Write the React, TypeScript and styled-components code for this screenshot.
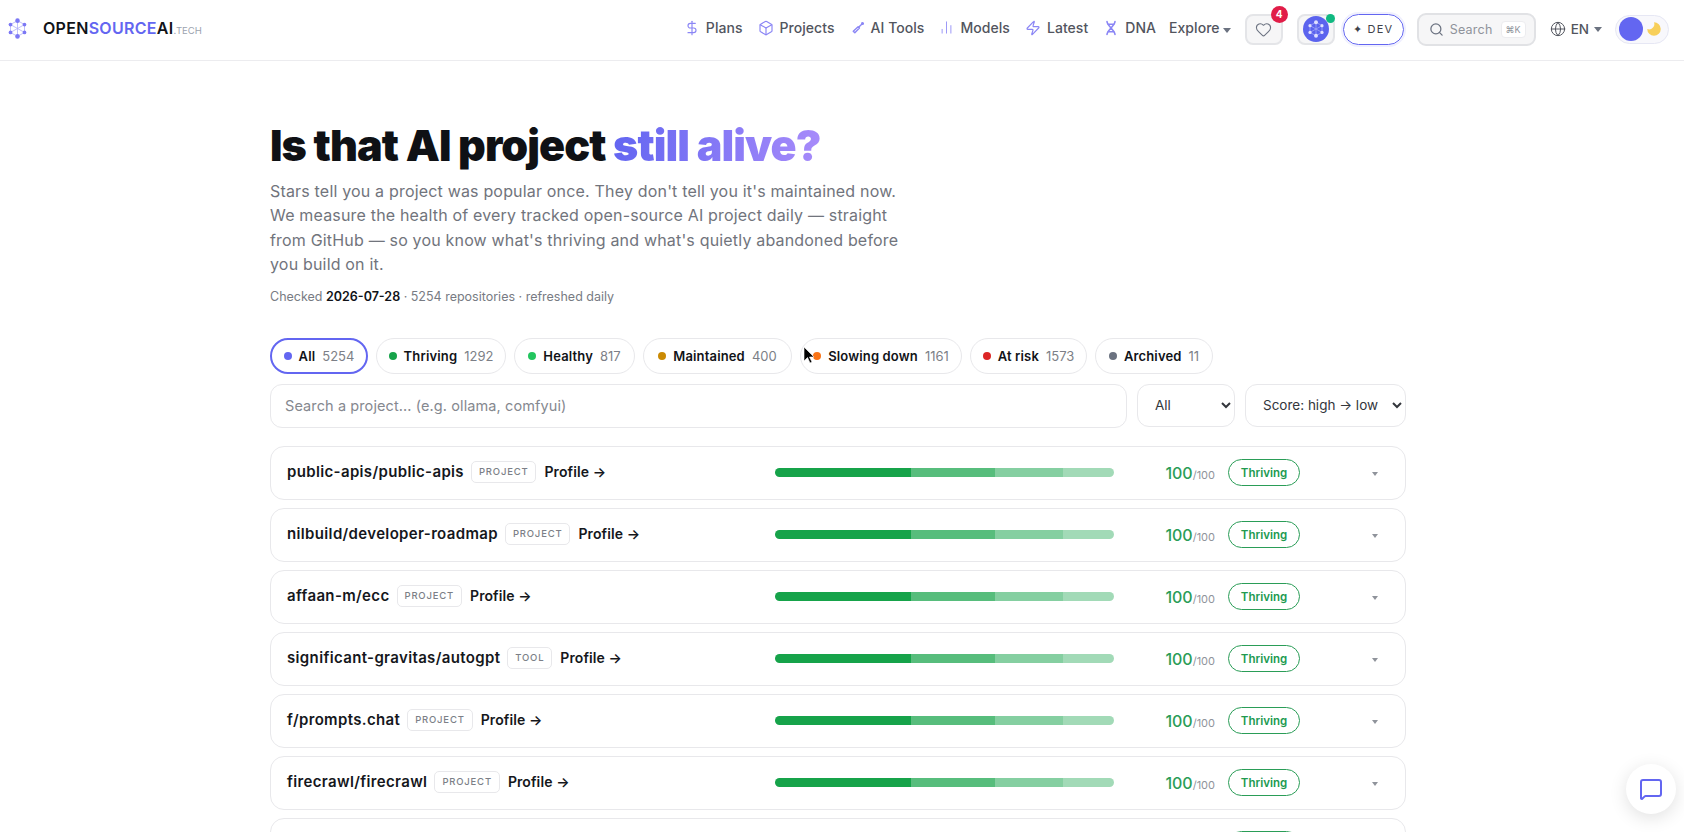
import React from 'react'
import styled, { createGlobalStyle } from 'styled-components'
import { Box, ChartNoAxesColumn, DollarSign, Globe, Heart, MessageSquare, Search, Zap } from 'lucide-react'

const font = `Inter, "Open Sans", sans-serif`

const GlobalStyle = createGlobalStyle`
  html, body {
    margin: 0;
    height: 832px;
    overflow: hidden;
    background: #fff;
    font-family: ${font};
  }
  * { box-sizing: border-box; }
`

const Header = styled.header`
  height: 61px;
  border-bottom: 1px solid #ececef;
  display: flex;
  align-items: center;
  justify-content: space-between;
  padding: 0 15px 2px 7px;
`

const Brand = styled.div`
  display: flex;
  align-items: center;
  gap: 15px;
  padding-bottom: 2px;
`

const BrandName = styled.div`
  font-size: 16px;
  font-weight: 600;
  letter-spacing: 0.3px;
  color: #111318;
  span { color: #6366f1; }
  small {
    font-size: 9.5px;
    font-weight: 400;
    letter-spacing: 0;
    color: #9ca3af;
  }
`

const Right = styled.div`
  display: flex;
  align-items: center;
  gap: 14px;
`

const Nav = styled.nav`
  display: flex;
  align-items: center;
  gap: 15px;
  padding-bottom: 3px;
`

const NavLink = styled.a`
  display: flex;
  align-items: center;
  gap: 6px;
  font-size: 14px;
  font-weight: 500;
  letter-spacing: 0.05px;
  color: #52555e;
  white-space: nowrap;
  svg { color: #8b86f5; flex: none; }
`

const ExploreLink = styled(NavLink)`
  margin-left: -2px;
`

const Caret = styled.i<{ $color?: string; $small?: boolean; $gap?: number }>`
  display: inline-block;
  margin-left: ${p => p.$gap ?? 6}px;
  border-left: ${p => (p.$small ? 3 : 4)}px solid transparent;
  border-right: ${p => (p.$small ? 3 : 4)}px solid transparent;
  border-top: ${p => (p.$small ? 4 : 5)}px solid ${p => p.$color || '#6b7280'};
`

const IconButton = styled.div`
  position: relative;
  width: 38px;
  height: 31px;
  border: 2px solid #e4e5e8;
  border-radius: 8px;
  background: #f6f6f7;
  display: flex;
  align-items: center;
  justify-content: center;
  color: #6b7280;
`

const CountBadge = styled.span`
  position: absolute;
  top: -10px;
  right: -7px;
  width: 17px;
  height: 17px;
  border-radius: 50%;
  background: #e11d48;
  color: #fff;
  font-size: 10px;
  font-weight: 700;
  display: flex;
  align-items: center;
  justify-content: center;
`

const OnlineDot = styled.span`
  position: absolute;
  top: -2px;
  right: -2px;
  width: 9px;
  height: 9px;
  border-radius: 50%;
  background: #10b981;
`

const Avatar = styled.div`
  width: 26px;
  height: 26px;
  border-radius: 50%;
  background: #5b63ee;
  display: flex;
  align-items: center;
  justify-content: center;
`

const Pair = styled.div`
  display: flex;
  align-items: center;
  gap: 8px;
`

const DevPill = styled.div`
  width: 61px;
  height: 31px;
  border: 1.5px solid #6366f1;
  border-radius: 16px;
  box-shadow: 0 0 0 2px #f0f0fe;
  display: flex;
  align-items: center;
  justify-content: center;
  gap: 4px;
  padding-bottom: 1px;
  font-size: 11px;
  font-weight: 400;
  letter-spacing: 1.3px;
  color: #3f424a;
`

const SearchBox = styled.div`
  width: 119px;
  height: 33px;
  margin-left: -1px;
  border: 2px solid #e1e2e5;
  border-radius: 9px;
  background: #f6f6f7;
  display: flex;
  align-items: center;
  padding: 0 8px 0 10px;
  gap: 6px;
  font-size: 12.5px;
  letter-spacing: 0.25px;
  color: #8f939b;
  svg { color: #6b7280; flex: none; }
`

const Kbd = styled.span`
  margin-left: auto;
  padding: 2px 4px;
  background: #fff;
  border: 1px solid #ececef;
  border-radius: 4px;
  font-size: 9px;
  letter-spacing: 0;
  color: #8f939b;
`

const Lang = styled.div`
  display: flex;
  align-items: center;
  gap: 5px;
  font-size: 13.5px;
  font-weight: 500;
  color: #52555e;
  svg { color: #52555e; }
`

const Toggle = styled.div`
  width: 54px;
  height: 29px;
  border: 1px solid #e6e7f4;
  border-radius: 15px;
  background: #f8f8fc;
  display: flex;
  align-items: center;
  justify-content: space-between;
  padding: 0 5px 0 3px;
  margin-left: -1px;
`

const Knob = styled.span`
  width: 24px;
  height: 24px;
  border-radius: 50%;
  background: #6366f1;
`

const Main = styled.main`
  width: 1136px;
  margin-left: 270px;
`

const Title = styled.h1`
  margin: 52px 0 2px;
  font-size: 43px;
  line-height: 64px;
  font-weight: 900;
  letter-spacing: -0.93px;
  color: #0f1115;
  em {
    font-style: normal;
    background: linear-gradient(90deg, #6366f1, #a78bfa);
    -webkit-background-clip: text;
    background-clip: text;
    color: transparent;
  }
`

const Lead = styled.p`
  margin: 0;
  width: 632px;
  font-size: 16px;
  line-height: 24.4px;
  font-weight: 400;
  letter-spacing: 0.18px;
  color: #71747c;
`

const Checked = styled.p`
  margin: 10px 0 0;
  font-size: 12.5px;
  line-height: 20px;
  color: #787b83;
  b { font-weight: 600; color: #111318; }
`

const Pills = styled.div`
  margin-top: 31px;
  display: flex;
  gap: 8px;
`

const Pill = styled.div<{ $active?: boolean; $width: number }>`
  width: ${p => p.$width}px;
  height: 36px;
  border: ${p => (p.$active ? '2px solid #6366f1' : '1px solid #e8e8eb')};
  border-radius: 18px;
  display: flex;
  align-items: center;
  justify-content: center;
  font-size: 13px;
  white-space: nowrap;
  b { font-weight: 600; letter-spacing: 0.15px; color: #111318; margin-right: 7px; }
  span { color: #7c7f87; }
`

const Dot = styled.i<{ $color: string }>`
  width: 8px;
  height: 8px;
  border-radius: 50%;
  background: ${p => p.$color};
  margin-right: 7px;
`

const Filters = styled.div`
  margin-top: 10px;
  display: flex;
  gap: 10px;
`

const SearchInput = styled.input`
  flex: 1;
  height: 44px;
  border: 1px solid #e8e8eb;
  border-radius: 12px;
  padding: 0 14px;
  font-family: ${font};
  font-size: 14.5px;
  letter-spacing: 0.1px;
  color: #111318;
  &::placeholder { color: #85888f; }
`

const Select = styled.select<{ $width: number }>`
  width: ${p => p.$width}px;
  height: 43px;
  border: 1px solid #e8e8eb;
  border-radius: 12px;
  background: #fff;
  padding: 0 5px 0 13px;
  font-family: ${font};
  font-size: 13.5px;
  color: #33363c;
`

const Rows = styled.div`
  margin-top: 18px;
  display: flex;
  flex-direction: column;
  gap: 8px;
`

const Row = styled.div`
  height: 54px;
  flex: none;
  border: 1px solid #e8e8eb;
  border-radius: 14px;
  padding: 0 16px;
  display: grid;
  grid-template-columns: 1fr 339px 101px 85px 89px;
  align-items: center;
`

const RowTitle = styled.div`
  display: flex;
  align-items: center;
  padding-bottom: 2px;
`

const RepoName = styled.span`
  font-size: 15px;
  font-weight: 600;
  letter-spacing: 0.35px;
  color: #15171c;
`

const Tag = styled.span`
  margin: 0 8px 0 7px;
  padding: 4px 7px;
  border: 1px solid #e8e8eb;
  border-radius: 5px;
  font-size: 9.5px;
  line-height: 12px;
  font-weight: 500;
  letter-spacing: 0.8px;
  color: #7c7f87;
`

const ProfileLink = styled.a`
  font-size: 14px;
  font-weight: 600;
  letter-spacing: 0.1px;
  color: #15171c;
`

const Bar = styled.div`
  height: 9px;
  border-radius: 5px;
  overflow: hidden;
  display: flex;
`

const Segment = styled.i<{ $width: number; $alpha: number }>`
  width: ${p => p.$width}%;
  background: rgba(22, 163, 74, ${p => p.$alpha});
`

const Score = styled.div`
  text-align: right;
  font-size: 16px;
  font-weight: 500;
  color: #2a9d57;
  small {
    font-size: 11px;
    font-weight: 400;
    color: #8f939b;
  }
`

const StatusCell = styled.div`
  display: flex;
  justify-content: flex-end;
`

const Status = styled.span`
  width: 72px;
  height: 27px;
  border: 1px solid #2a9d57;
  border-radius: 14px;
  display: flex;
  align-items: center;
  justify-content: center;
  font-size: 11.5px;
  font-weight: 600;
  color: #219a50;
`

const Expand = styled.div`
  text-align: right;
  padding-right: 11px;
  line-height: 0;
`

const ChatButton = styled.div`
  position: fixed;
  left: 1626px;
  top: 764px;
  width: 50px;
  height: 50px;
  border-radius: 50%;
  background: #fff;
  box-shadow: 0 4px 18px rgba(0, 0, 0, 0.12);
  display: flex;
  align-items: center;
  justify-content: center;
  color: #6366f1;
`

const Pointer = styled.svg`
  position: fixed;
  left: 803px;
  top: 346px;
`

const ToolIcon = styled.svg`
  margin-left: 2px;
`

const navItems = [
  { label: 'Plans', icon: <DollarSign size={16} strokeWidth={1.75} /> },
  { label: 'Projects', icon: <Box size={16} strokeWidth={1.75} /> },
  {
    label: 'AI Tools',
    icon: (
      <ToolIcon width="13" height="13" viewBox="0 0 16 16" fill="none" stroke="currentColor" strokeWidth="1.7" strokeLinecap="round" strokeLinejoin="round">
        <path d="M3.500 14.500L1.500 12.500L7.500 7L9.200 8.700Z" />
        <path d="M8.500 7.500L12 4" />
        <circle cx="13" cy="3" r="1" fill="currentColor" />
      </ToolIcon>
    )
  },
  { label: 'Models', icon: <ChartNoAxesColumn size={15} strokeWidth={1.5} style={{ opacity: 0.9 }} /> },
  { label: 'Latest', icon: <Zap size={16} strokeWidth={1.75} /> },
  {
    label: 'DNA',
    icon: (
      <svg width="16" height="16" viewBox="0 0 16 16" fill="none" stroke="currentColor" strokeWidth="1.6" strokeLinecap="round">
        <path d="M4 1.500C4 5.500 12 10.500 12 14.500M12 1.500C12 5.500 4 10.500 4 14.500M4.800 4.300H11.200M4.800 11.700H11.200" />
      </svg>
    )
  }
]

const pills = [
  { label: 'All', count: 5254, color: '#6366f1', width: 98, active: true },
  { label: 'Thriving', count: 1292, color: '#16a34a', width: 130 },
  { label: 'Healthy', count: 817, color: '#22c55e', width: 121 },
  { label: 'Maintained', count: 400, color: '#ca8a04', width: 149 },
  { label: 'Slowing down', count: 1161, color: '#f97316', width: 162 },
  { label: 'At risk', count: 1573, color: '#dc2626', width: 117 },
  { label: 'Archived', count: 11, color: '#6b7280', width: 118 }
]

const repos = [
  { name: 'public-apis/public-apis', kind: 'PROJECT' },
  { name: 'nilbuild/developer-roadmap', kind: 'PROJECT' },
  { name: 'affaan-m/ecc', kind: 'PROJECT' },
  { name: 'significant-gravitas/autogpt', kind: 'TOOL' },
  { name: 'f/prompts.chat', kind: 'PROJECT' },
  { name: 'firecrawl/firecrawl', kind: 'PROJECT' },
  { name: 'langchain-ai/langchain', kind: 'PROJECT' }
]

const segments = [
  { width: 40, alpha: 1 },
  { width: 25, alpha: 0.72 },
  { width: 20, alpha: 0.52 },
  { width: 15, alpha: 0.4 }
]

// network mark, used in the brand and on the avatar
function Mark({ size, color }: { size: number; color: string }) {
  const nodes = [
    [12, 3],
    [20, 7.5],
    [20, 16.5],
    [12, 21],
    [4, 16.5],
    [4, 7.5]
  ]
  return (
    <svg width={size} height={size} viewBox="0 0 24 24" fill="none">
      <g stroke={color} strokeWidth="0.9" opacity="0.6">
        <path d="M12 3L20 7.5V16.5L12 21L4 16.5V7.5Z" />
        <path d="M12 3V21M4 7.5L20 16.5M20 7.5L4 16.5" />
      </g>
      {nodes.map(([x, y], i) => (
        <circle key={i} cx={x} cy={y} r={i === 0 || i === 3 ? 2.6 : 2.1} fill={color} />
      ))}
    </svg>
  )
}

export default function App() {
  return (
    <>
      <GlobalStyle />
      <Header>
        <Brand>
          <Mark size={21} color="#7c78f5" />
          <BrandName>
            OPEN<span>SOURCE</span>AI<small>.TECH</small>
          </BrandName>
        </Brand>
        <Right>
          <Nav>
            {navItems.map(item => (
              <NavLink key={item.label}>
                {item.icon}
                {item.label}
              </NavLink>
            ))}
            <ExploreLink>
              <span>
                Explore
                <Caret $gap={3} />
              </span>
            </ExploreLink>
          </Nav>
          <IconButton>
            <Heart size={17} strokeWidth={1.5} />
            <CountBadge>4</CountBadge>
          </IconButton>
          <Pair>
            <IconButton>
              <Avatar>
                <Mark size={18} color="#dfe0ff" />
              </Avatar>
              <OnlineDot />
            </IconButton>
            <DevPill>✦ DEV</DevPill>
          </Pair>
          <SearchBox>
            <Search size={15} />
            Search
            <Kbd>⌘K</Kbd>
          </SearchBox>
          <Lang>
            <Globe size={16} strokeWidth={1.5} />
            EN
            <Caret $gap={0} />
          </Lang>
          <Toggle>
            <Knob />
            <svg width="18" height="18" viewBox="0 0 24 24">
              <path transform="rotate(-90 12 12)" d="M12 3a7 7 0 0 0 9 9 9 9 0 1 1-9-9Z" fill="#f7cf5a" />
            </svg>
          </Toggle>
        </Right>
      </Header>
      <Main>
        <Title>
          Is that AI project <em>still alive?</em>
        </Title>
        <Lead>
          Stars tell you a project was popular once. They don't tell you it's maintained now. We measure the health of every
          tracked open-source AI project daily — straight from GitHub — so you know what's thriving and what's quietly
          abandoned before you build on it.
        </Lead>
        <Checked>
          Checked <b>2026-07-28</b> · 5254 repositories · refreshed daily
        </Checked>
        <Pills>
          {pills.map(pill => (
            <Pill key={pill.label} $active={pill.active} $width={pill.width}>
              <Dot $color={pill.color} />
              <b>{pill.label}</b>
              <span>{pill.count}</span>
            </Pill>
          ))}
        </Pills>
        <Filters>
          <SearchInput placeholder="Search a project... (e.g. ollama, comfyui)" />
          <Select $width={98}>
            <option>All</option>
          </Select>
          <Select $width={161}>
            <option>Score: high → low</option>
          </Select>
        </Filters>
        <Rows>
          {repos.map(repo => (
            <Row key={repo.name}>
              <RowTitle>
                <RepoName>{repo.name}</RepoName>
                <Tag>{repo.kind}</Tag>
                <ProfileLink>Profile →</ProfileLink>
              </RowTitle>
              <Bar>
                {segments.map(s => (
                  <Segment key={s.width} $width={s.width} $alpha={s.alpha} />
                ))}
              </Bar>
              <Score>
                100<small>/100</small>
              </Score>
              <StatusCell>
                <Status>Thriving</Status>
              </StatusCell>
              <Expand>
                <Caret $small $color="#8f939b" />
              </Expand>
            </Row>
          ))}
        </Rows>
      </Main>
      <ChatButton>
        <MessageSquare size={24} strokeWidth={2} />
      </ChatButton>
      <Pointer width="12" height="18" viewBox="0 0 12 18">
        <path d="M1 1v14l3.500-3.500 2.500 5.500 2-1-2.500-5H11Z" fill="#000" stroke="#fff" strokeWidth="0.6" />
      </Pointer>
    </>
  )
}
